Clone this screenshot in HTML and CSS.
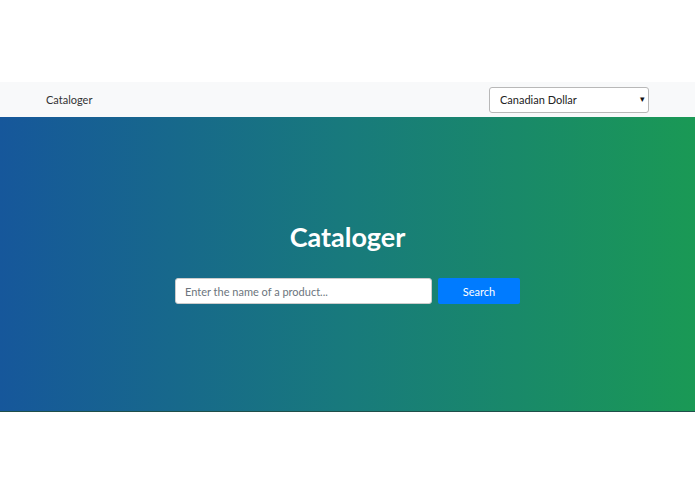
FILE: index.html
```html
<!DOCTYPE html>
<html lang="en">
<head>
  <meta charset="UTF-8">
  <meta name="viewport" content="width=device-width, initial-scale=1.0">
  <title>Cataloger</title>
  <link rel="stylesheet" href="styles.css">
</head>
<body>
  <div class="page">
    <!-- Navbar -->
    <nav class="navbar">
      <a href="#" class="brand">Cataloger</a>
      <div class="currency">
        <select>
          <option>Canadian Dollar</option>
          <option>US Dollar</option>
          <option>Euro</option>
        </select>
      </div>
    </nav>

    <!-- Hero with search -->
    <section class="hero">
      <h1>Cataloger</h1>
      <form class="search" onsubmit="return false">
        <input type="text" placeholder="Enter the name of a product...">
        <button type="submit">Search</button>
      </form>
    </section>
  </div>
</body>
</html>
```

FILE: styles.css
```css
body {
  font-family: Lato, "Noto Sans", sans-serif;
  margin: 0;
  padding: 0;
  background-color: white;
}

.page {
  padding-top: 82px;
}

.navbar {
  display: flex;
  justify-content: space-between;
  align-items: center;
  height: 35px;
  padding: 0 46px;
  background-color: #f8f9fa;
}

.brand {
  color: #333;
  font-size: 11px;
  text-decoration: none;
}

.currency {
  position: relative;
}

.currency select {
  appearance: none;
  -webkit-appearance: none;
  width: 160px;
  height: 26px;
  padding: 0 10px;
  font-family: inherit;
  font-size: 11px;
  color: #222;
  background-color: white;
  border: 1px solid #b8b8b8;
  border-radius: 3px;
}

.currency::after {
  content: "\25BE";
  position: absolute;
  right: 4px;
  top: 6px;
  font-size: 9px;
  color: #111;
  pointer-events: none;
}

.hero {
  display: flex;
  flex-direction: column;
  align-items: center;
  justify-content: center;
  height: 294px;
  background: linear-gradient(to right, #16579b, #187a7c 50%, #1a9955);
  border-bottom: 1px solid #1f4f4a;
}

.hero h1 {
  margin: -4px 0 25px;
  color: white;
  font-size: 27px;
  font-weight: bold;
}

.search {
  display: flex;
  gap: 6px;
}

.search input {
  width: 257px;
  height: 26px;
  box-sizing: border-box;
  padding: 0 9px;
  font-family: inherit;
  font-size: 11px;
  border: 1px solid #ccc;
  border-radius: 3px;
}

.search input::placeholder {
  color: #6c757d;
}

.search button {
  width: 82px;
  height: 26px;
  font-family: inherit;
  font-size: 11px;
  color: white;
  background-color: #007bff;
  border: none;
  border-radius: 2px;
  cursor: pointer;
}
```
